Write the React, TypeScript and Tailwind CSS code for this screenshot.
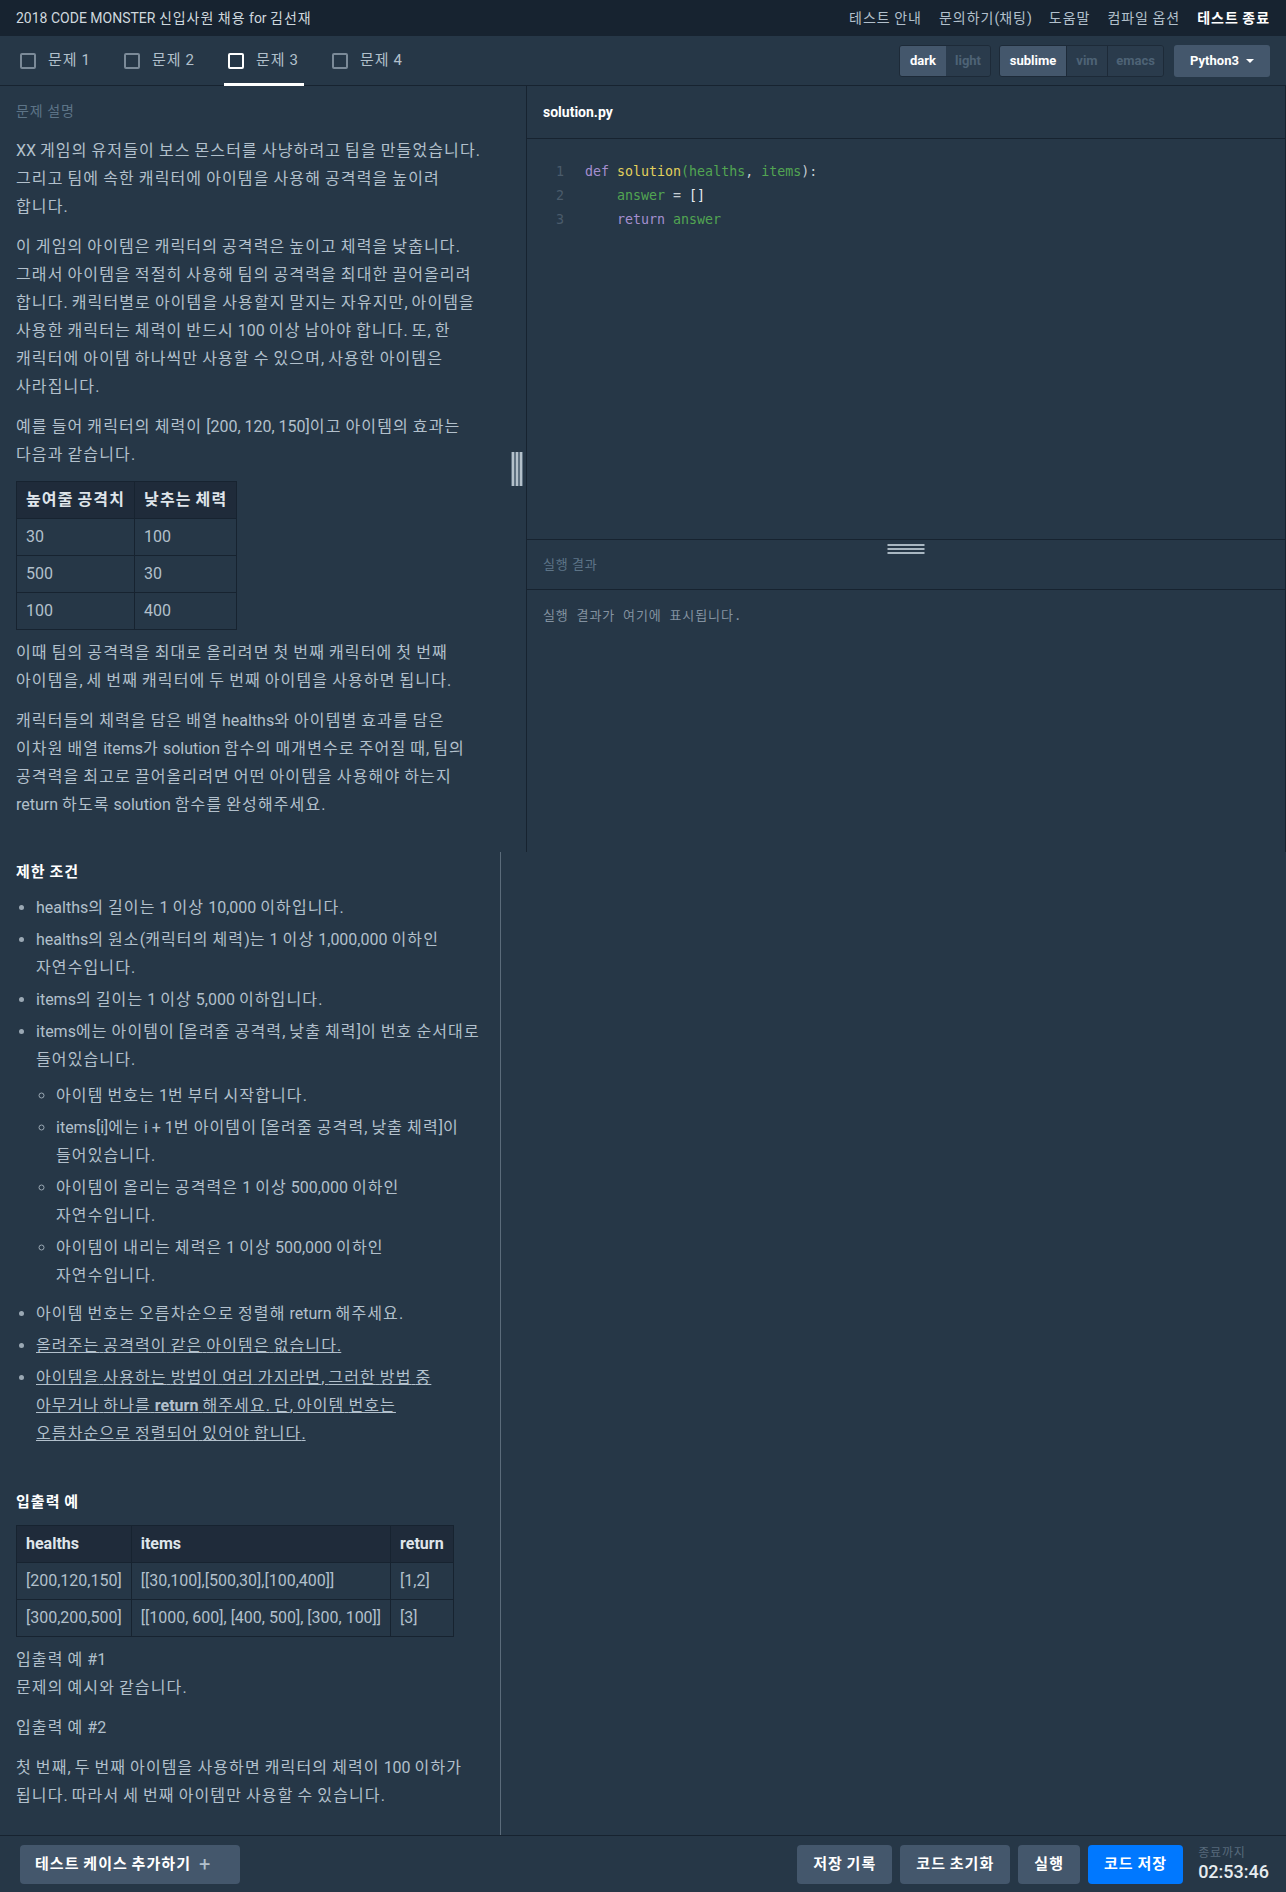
import React from "react";

const SANS = "font-[family-name:Roboto,'Noto_Sans_CJK_KR',sans-serif]";
const MONO = "font-[family-name:'DejaVu_Sans_Mono','Noto_Sans_CJK_KR',monospace]";

const HANGUL = /([\uAC00-\uD7A3]+)/;
function k(s: string): React.ReactNode {
  return s.split(HANGUL).map((part, i) =>
    i % 2 === 1 ? (
      <span key={i} className="tracking-[0.07em]">
        {part}
      </span>
    ) : (
      <React.Fragment key={i}>{part}</React.Fragment>
    )
  );
}

function Tab({ label, active }: { label: string; active?: boolean }) {
  return (
    <div className="relative flex w-[80px] items-center gap-[12px] pl-[4px]">
      <span
        className={
          "block h-4 w-4 shrink-0 rounded-[2px] border-2 " +
          (active ? "border-white" : "border-[#7b8a98]")
        }
      />
      <span className="whitespace-nowrap text-[15px] text-[#b2c0cc]">{k(label)}</span>
      {active && <span className="absolute -bottom-px left-0 right-0 h-[3px] bg-white" />}
    </div>
  );
}

function Th({ children }: { children: React.ReactNode }) {
  return (
    <th className="border border-[#172330] px-[9px] py-[4px] text-left font-bold text-[#dfe5ea]">
      {children}
    </th>
  );
}
function Td({ children }: { children: React.ReactNode }) {
  return <td className="border border-[#172330] px-[9px] py-[4px]">{children}</td>;
}

export default function App() {
  return (
    <div
      className={
        "flex h-[1892px] flex-col overflow-hidden break-keep bg-[#263747] text-[#b2c0cc] " + SANS
      }
    >
      {/* header */}
      <header className="flex h-[36px] shrink-0 items-center justify-between bg-[#172330] px-4">
        <div className="text-[14px] text-[#cfd8de]">{k("2018 CODE MONSTER 신입사원 채용 for 김선재")}</div>
        <nav className="flex items-center gap-[17px] text-[14px] text-[#b2c0cc]">
          <span>{k("테스트 안내")}</span>
          <span>{k("문의하기(채팅)")}</span>
          <span>{k("도움말")}</span>
          <span>{k("컴파일 옵션")}</span>
          <span className="font-bold text-white">{k("테스트 종료")}</span>
        </nav>
      </header>

      {/* tab bar */}
      <div className="flex h-[50px] shrink-0 items-stretch justify-between border-b border-[#172330] pl-4 pr-4">
        <div className="flex items-stretch gap-[24px]">
          <Tab label="문제 1" />
          <Tab label="문제 2" />
          <Tab label="문제 3" active />
          <Tab label="문제 4" />
        </div>
        <div className="flex items-center text-[13px] font-bold">
          <div className="flex h-[32px] overflow-hidden rounded-[3px] border border-[#1d2a38]">
            <span className="flex w-[46px] items-center justify-center bg-[#44576c] text-white">dark</span>
            <span className="flex w-[44px] items-center justify-center bg-[#2a3b4c] text-[#4e6376]">light</span>
          </div>
          <div className="ml-[8px] flex h-[32px] overflow-hidden rounded-[3px] border border-[#1d2a38]">
            <span className="flex w-[66px] items-center justify-center bg-[#44576c] text-white">sublime</span>
            <span className="flex w-[41px] items-center justify-center border-l border-[#1d2a38] bg-[#2a3b4c] text-[#4e6376]">vim</span>
            <span className="flex w-[56px] items-center justify-center border-l border-[#1d2a38] bg-[#2a3b4c] text-[#4e6376]">emacs</span>
          </div>
          <div className="ml-[10px] flex h-[32px] w-[96px] items-center justify-center gap-[7px] rounded-[3px] bg-[#44576c] text-white">
            <span>Python3</span>
            <span className="mt-[1px] block h-0 w-0 border-x-[4px] border-t-[4px] border-x-transparent border-t-white" />
          </div>
        </div>
      </div>

      {/* upper split area */}
      <div className="flex h-[766px] shrink-0">
        <div className="relative w-[526px] shrink-0 overflow-hidden">
          <div className="w-[504px] px-4 pt-[15px] text-[16px] leading-[28px]">
            <div className="text-[14px] leading-[20px] text-[#5d7487]">{k("문제 설명")}</div>
            <p className="mb-3 mt-4">
              {k("XX 게임의 유저들이 보스 몬스터를 사냥하려고 팀을 만들었습니다. 그리고 팀에 속한 캐릭터에 아이템을 사용해 공격력을 높이려 합니다.")}
            </p>
            <p className="mb-3">
              {k("이 게임의 아이템은 캐릭터의 공격력은 높이고 체력을 낮춥니다. 그래서 아이템을 적절히 사용해 팀의 공격력을 최대한 끌어올리려 합니다. 캐릭터별로 아이템을 사용할지 말지는 자유지만, 아이템을 사용한 캐릭터는 체력이 반드시 100 이상 남아야 합니다. 또, 한 캐릭터에 아이템 하나씩만 사용할 수 있으며, 사용한 아이템은 사라집니다.")}
            </p>
            <p className="mb-3">
              {k("예를 들어 캐릭터의 체력이 [200, 120, 150]이고 아이템의 효과는 다음과 같습니다.")}
            </p>
            <table className="mb-[9px] border-collapse border border-[#172330]">
              <thead>
                <tr className="bg-[#1f2b3a]">
                  <Th>{k("높여줄 공격치")}</Th>
                  <Th>{k("낮추는 체력")}</Th>
                </tr>
              </thead>
              <tbody>
                <tr>
                  <Td>30</Td>
                  <Td>100</Td>
                </tr>
                <tr>
                  <Td>500</Td>
                  <Td>30</Td>
                </tr>
                <tr>
                  <Td>100</Td>
                  <Td>400</Td>
                </tr>
              </tbody>
            </table>
            <p className="mb-3">
              {k("이때 팀의 공격력을 최대로 올리려면 첫 번째 캐릭터에 첫 번째 아이템을, 세 번째 캐릭터에 두 번째 아이템을 사용하면 됩니다.")}
            </p>
            <p className="mb-3">
              {k("캐릭터들의 체력을 담은 배열 healths와 아이템별 효과를 담은 이차원 배열 items가 solution 함수의 매개변수로 주어질 때, 팀의 공격력을 최고로 끌어올리려면 어떤 아이템을 사용해야 하는지 return 하도록 solution 함수를 완성해주세요.")}
            </p>
          </div>
          {/* splitter handle */}
          <div className="absolute left-[511px] top-[366px] flex h-[34px] w-[12px] gap-[2px] bg-[#5f7181] px-[1px]">
            <span className="w-[2px] bg-[#b3c0ca]" />
            <span className="w-[2px] bg-[#b3c0ca]" />
            <span className="w-[2px] bg-[#b3c0ca]" />
          </div>
        </div>

        <div className="flex flex-1 flex-col border-l border-r border-[#172330]">
          <div className="flex h-[53px] shrink-0 items-center border-b border-[#172330] pl-[16px] text-[14px] font-bold text-white">
            solution.py
          </div>
          <div className={"h-[400px] shrink-0 pt-[21px] text-[13.3px] leading-[24px] " + MONO}>
            <div className="flex whitespace-pre">
              <span className="w-[37px] text-right text-[#4a5b6b]">1</span>
              <span className="ml-[21px]">
                <span className="text-[#a58fd0]">def</span>{" "}
                <span className="text-[#e3d05c]">solution</span>
                <span className="text-[#52a552]">(</span>
                <span className="text-[#52a552]">healths</span>
                <span className="text-[#c5cdd3]">, </span>
                <span className="text-[#52a552]">items</span>
                <span className="text-[#c5cdd3]">):</span>
              </span>
            </div>
            <div className="flex whitespace-pre">
              <span className="w-[37px] text-right text-[#4a5b6b]">2</span>
              <span className="ml-[21px]">
                {"    "}
                <span className="text-[#52a552]">answer</span>
                <span className="text-[#c5cdd3]"> = </span>
                <span className="text-[#e6ebef]">[]</span>
              </span>
            </div>
            <div className="flex whitespace-pre">
              <span className="w-[37px] text-right text-[#4a5b6b]">3</span>
              <span className="ml-[21px]">
                {"    "}
                <span className="text-[#a58fd0]">return</span>{" "}
                <span className="text-[#52a552]">answer</span>
              </span>
            </div>
          </div>
          <div className="relative flex h-[51px] shrink-0 items-center border-y border-[#172330] pl-[16px] text-[13px] text-[#5d7487]">
            <span className="whitespace-pre">{k("실행 결과")}</span>
            <div className="absolute left-1/2 top-[4px] flex w-[37px] -translate-x-1/2 flex-col gap-[2px]">
              <span className="h-[2px] bg-[#a9b7c2]" />
              <span className="h-[2px] bg-[#a9b7c2]" />
              <span className="h-[2px] bg-[#a9b7c2]" />
            </div>
          </div>
          <div className={"flex-1 pl-[16px] pt-[16px] text-[13px] leading-[20px] text-[#8392a0] " + MONO}>
            {k("실행 결과가 여기에 표시됩니다.")}
          </div>
        </div>
      </div>

      {/* lower overflow area */}
      <div className="flex flex-1">
        <div className="w-[501px] shrink-0 border-r border-[#5b6b7a] px-4 pt-[6px] text-[16px] leading-[28px]">
          <h5 className="mb-2 text-[15px] font-bold leading-[28px] text-white">{k("제한 조건")}</h5>
          <ul className="list-disc pl-5 marker:text-[#9aa8b4]">
            <li className="mb-1">{k("healths의 길이는 1 이상 10,000 이하입니다.")}</li>
            <li className="mb-1">{k("healths의 원소(캐릭터의 체력)는 1 이상 1,000,000 이하인 자연수입니다.")}</li>
            <li className="mb-1">{k("items의 길이는 1 이상 5,000 이하입니다.")}</li>
            <li className="mb-1">
              {k("items에는 아이템이 [올려줄 공격력, 낮출 체력]이 번호 순서대로 들어있습니다.")}
              <ul className="mb-[10px] mt-2 list-[circle] pl-5">
                <li className="mb-1">{k("아이템 번호는 1번 부터 시작합니다.")}</li>
                <li className="mb-1">{k("items[i]에는 i + 1번 아이템이 [올려줄 공격력, 낮출 체력]이 들어있습니다.")}</li>
                <li className="mb-1">{k("아이템이 올리는 공격력은 1 이상 500,000 이하인 자연수입니다.")}</li>
                <li className="mb-1">{k("아이템이 내리는 체력은 1 이상 500,000 이하인 자연수입니다.")}</li>
              </ul>
            </li>
            <li className="mb-1">{k("아이템 번호는 오름차순으로 정렬해 return 해주세요.")}</li>
            <li className="mb-1">
              <u>{k("올려주는 공격력이 같은 아이템은 없습니다.")}</u>
            </li>
            <li className="mb-1">
              <u>
                {k("아이템을 사용하는 방법이 여러 가지라면, 그러한 방법 중 아무거나 하나를 ")}
                <b>return</b>
                {k(" 해주세요. 단, 아이템 번호는 오름차순으로 정렬되어 있어야 합니다.")}
              </u>
            </li>
          </ul>

          <h5 className="mb-[9px] mt-[40px] text-[15px] font-bold leading-[28px] text-white">{k("입출력 예")}</h5>
          <table className="mb-[9px] border-collapse border border-[#172330]">
            <thead>
              <tr className="bg-[#1f2b3a]">
                <Th>healths</Th>
                <Th>items</Th>
                <Th>return</Th>
              </tr>
            </thead>
            <tbody>
              <tr>
                <Td>[200,120,150]</Td>
                <Td>[[30,100],[500,30],[100,400]]</Td>
                <Td>[1,2]</Td>
              </tr>
              <tr>
                <Td>[300,200,500]</Td>
                <Td>[[1000, 600], [400, 500], [300, 100]]</Td>
                <Td>[3]</Td>
              </tr>
            </tbody>
          </table>
          <p className="mb-3">
            {k("입출력 예 #1")}
            <br />
            {k("문제의 예시와 같습니다.")}
          </p>
          <p className="mb-3">{k("입출력 예 #2")}</p>
          <p className="mb-3">
            {k("첫 번째, 두 번째 아이템을 사용하면 캐릭터의 체력이 100 이하가 됩니다. 따라서 세 번째 아이템만 사용할 수 있습니다.")}
          </p>
        </div>
        <div className="flex-1" />
      </div>

      {/* footer */}
      <footer className="flex h-[57px] shrink-0 items-center justify-between border-t border-[#172330] pl-5 pr-[17px]">
        <button className="flex h-[39px] w-[220px] items-center gap-[8px] rounded-[4px] bg-[#44576c] pl-[15px] text-[15px] font-bold text-white">
          <span>{k("테스트 케이스 추가하기")}</span>
          <span className="text-[20px] font-normal text-[#b2c0cc]">+</span>
        </button>
        <div className="flex items-center">
          <button className="h-[39px] rounded-[4px] bg-[#44576c] px-4 text-[15px] font-bold text-white">{k("저장 기록")}</button>
          <button className="ml-2 h-[39px] rounded-[4px] bg-[#44576c] px-4 text-[15px] font-bold text-white">{k("코드 초기화")}</button>
          <button className="ml-2 h-[39px] rounded-[4px] bg-[#44576c] px-4 text-[15px] font-bold text-white">{k("실행")}</button>
          <button className="ml-2 h-[39px] rounded-[4px] bg-[#0078ff] px-4 text-[15px] font-bold text-white">{k("코드 저장")}</button>
          <div className="ml-[15px] flex flex-col">
            <span className="text-[12px] leading-[15px] text-[#56697b]">{k("종료까지")}</span>
            <span className="text-[18px] font-medium leading-[22px] text-[#e6ecf0]">02:53:46</span>
          </div>
        </div>
      </footer>
    </div>
  );
}
